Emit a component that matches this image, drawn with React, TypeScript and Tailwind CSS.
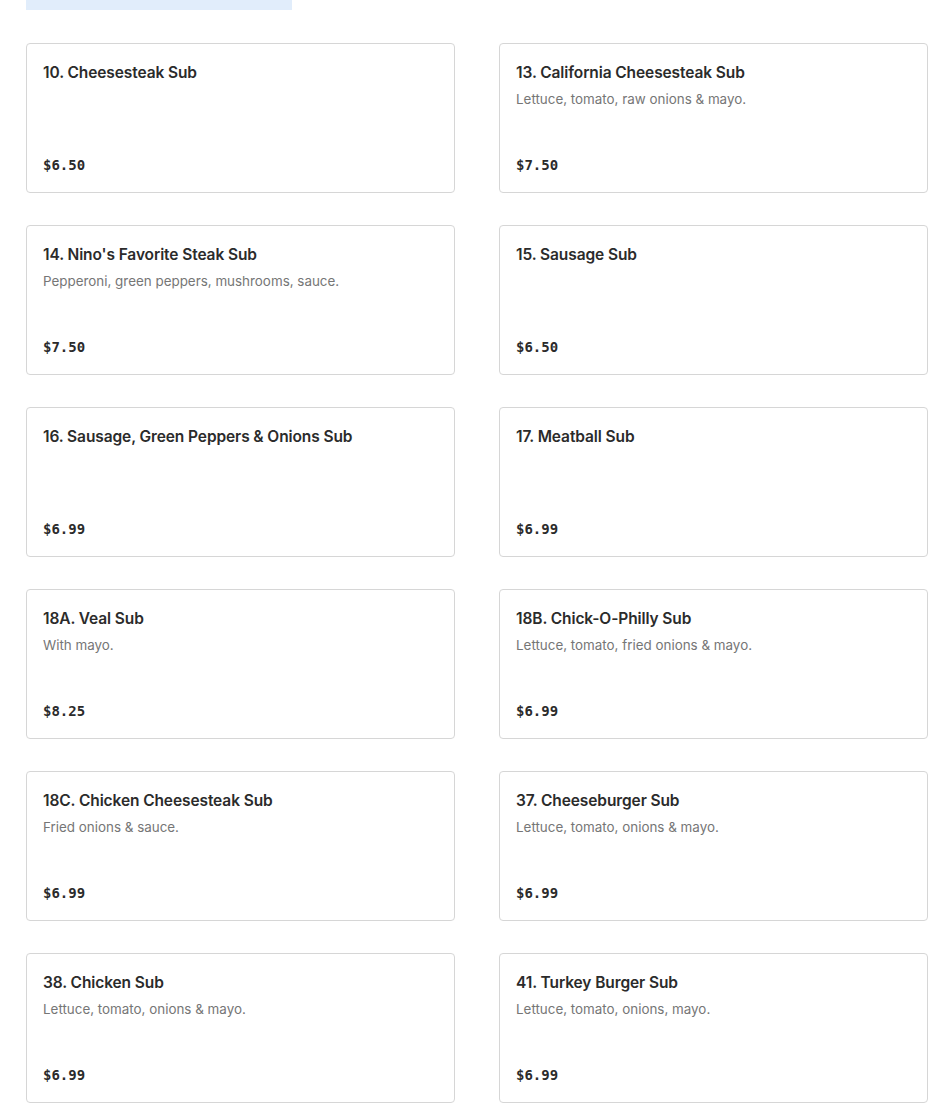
const items = [
  { name: "10. Cheesesteak Sub", desc: "", price: "$6.50" },
  { name: "13. California Cheesesteak Sub", desc: "Lettuce, tomato, raw onions & mayo.", price: "$7.50" },
  { name: "14. Nino's Favorite Steak Sub", desc: "Pepperoni, green peppers, mushrooms, sauce.", price: "$7.50" },
  { name: "15. Sausage Sub", desc: "", price: "$6.50" },
  { name: "16. Sausage, Green Peppers & Onions Sub", desc: "", price: "$6.99" },
  { name: "17. Meatball Sub", desc: "", price: "$6.99" },
  { name: "18A. Veal Sub", desc: "With mayo.", price: "$8.25" },
  { name: "18B. Chick-O-Philly Sub", desc: "Lettuce, tomato, fried onions & mayo.", price: "$6.99" },
  { name: "18C. Chicken Cheesesteak Sub", desc: "Fried onions & sauce.", price: "$6.99" },
  { name: "37. Cheeseburger Sub", desc: "Lettuce, tomato, onions & mayo.", price: "$6.99" },
  { name: "38. Chicken Sub", desc: "Lettuce, tomato, onions & mayo.", price: "$6.99" },
  { name: "41. Turkey Burger Sub", desc: "Lettuce, tomato, onions, mayo.", price: "$6.99" },
];

export default function App() {
  return (
    <div className="w-[950px] h-[1105px] overflow-hidden bg-white pl-[26px] pr-[22px]" style={{ fontFamily: "Inter, 'Noto Sans', sans-serif" }}>
      {/* category tab stub */}
      <div className="w-[266px] h-[10px] bg-[#e1edfb]" />

      <div className="mt-[33px] grid grid-cols-2 gap-x-[44px] gap-y-[32px]">
        {items.map((it) => (
          <div
            key={it.name}
            className="h-[150px] border border-[#d6d6d6] rounded-[4px] px-4 pt-[17px] pb-[17px] flex flex-col"
          >
            <div className="text-[15.5px] leading-6 font-semibold text-[#2b2b2b] tracking-[-0.1px]">{it.name}</div>
            {it.desc && (
              <div className="mt-[4px] text-[13.4px] leading-5 text-[#767676]">{it.desc}</div>
            )}
            <div
              className="mt-auto text-[14px] leading-5 font-bold text-[#2b2b2b]"
              style={{ fontFamily: "'DejaVu Sans Mono', monospace" }}
            >
              {it.price}
            </div>
          </div>
        ))}
      </div>
    </div>
  );
}
